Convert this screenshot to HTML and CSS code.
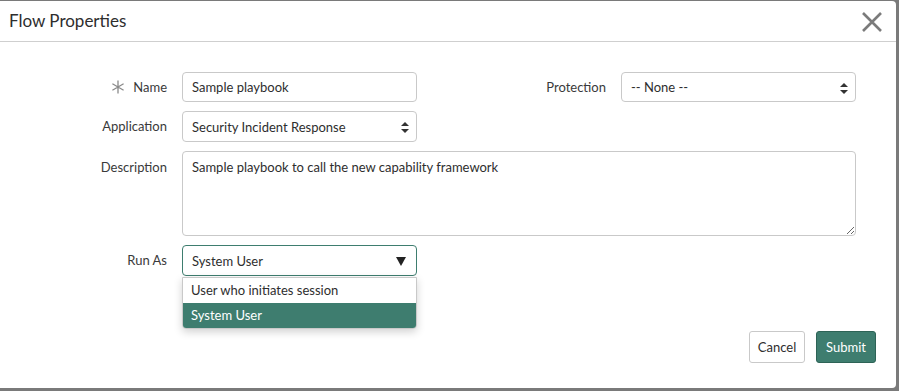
FILE: index.html
```html
<!DOCTYPE html>
<html lang="en">
<head>
    <meta charset="UTF-8">
    <meta name="viewport" content="width=device-width, initial-scale=1.0">
    <title>Flow Properties</title>
    <link rel="stylesheet" href="styles.css">
</head>
<body>
    <div class="modal">
        <!-- header -->
        <div class="modal_head">
            <h1>Flow Properties</h1>
            <span class="close">
                <svg width="20" height="20" viewBox="0 0 20 20">
                    <path d="M1 1 L19 19 M19 1 L1 19" stroke="#7b7b7b" stroke-width="2.6" fill="none"/>
                </svg>
            </span>
        </div>

        <!-- form -->
        <div class="modal_body">
            <div class="form">
                <label class="lbl">
                    <svg class="req" width="14" height="14" viewBox="0 0 14 14">
                        <path d="M7 0.5 V13.5 M1.4 3.8 L12.6 10.2 M12.6 3.8 L1.4 10.2" stroke="#8a8a8a" stroke-width="1.3" fill="none"/>
                    </svg>
                    Name
                </label>
                <div class="field">Sample playbook</div>
                <label class="lbl">Protection</label>
                <div class="field select">-- None --<span class="updown"></span></div>

                <label class="lbl">Application</label>
                <div class="field select">Security Incident Response<span class="updown"></span></div>
                <div></div>
                <div></div>

                <label class="lbl lbl_top">Description</label>
                <textarea class="area" readonly>Sample playbook to call the new capability framework</textarea>

                <label class="lbl">Run As</label>
                <div class="runas">
                    <div class="field select focus">System User<span class="down"></span></div>
                    <ul class="menu">
                        <li>User who initiates session</li>
                        <li class="active">System User</li>
                    </ul>
                </div>
            </div>

            <div class="foot">
                <button class="btn cancel">Cancel</button>
                <button class="btn primary">Submit</button>
            </div>
        </div>
    </div>
</body>
</html>
```

FILE: styles.css
```css
*{
    margin: 0;
    padding: 0;
    box-sizing: border-box;
}
li{
    list-style: none;
}
body{
    background: #7a7a7a;
    font-family: "Lato", "Liberation Sans", sans-serif;
    font-size: 13px;
    color: #333;
}
.modal{
    width: 900px;
    height: 387px;
    margin: 1px 0 0 -4px;
    background: #fff;
    border-radius: 4px;
}
.modal_head{
    height: 41px;
    border-bottom: 1px solid #cfcfcf;
    display: flex;
    align-items: center;
    justify-content: space-between;
    padding: 0 14px 0 13px;
}
.modal_head h1{
    font-weight: normal;
    font-size: 17px;
    color: #2e2e2e;
    margin-top: -1px;
}
.close{
    width: 20px;
    height: 20px;
    margin-top: 1px;
}
.modal_body{
    padding: 30px 40px 0 0;
}
.form{
    display: grid;
    grid-template-columns: 171px 235px 1fr 235px;
    grid-template-rows: 30px 31px 85px 31px;
    column-gap: 15px;
    row-gap: 9px;
}
.lbl{
    display: flex;
    align-items: center;
    justify-content: flex-end;
    color: #3a3a3a;
    margin-top: -1px;
}
.lbl_top{
    align-items: flex-start;
    margin-top: 8px;
}
.req{
    margin-right: 8px;
}
.field{
    border: 1px solid #c9c9c9;
    border-radius: 4px;
    display: flex;
    align-items: center;
    padding: 0 9px;
    color: #2e2e2e;
    position: relative;
}
.select .updown{
    position: absolute;
    right: 7px;
    top: 10px;
    width: 8px;
    height: 11px;
}
.select .updown:before,.select .updown:after{
    content: "";
    position: absolute;
    left: 0;
    border-left: 4px solid transparent;
    border-right: 4px solid transparent;
}
.select .updown:before{
    top: 0;
    border-bottom: 4px solid #333;
}
.select .updown:after{
    bottom: 0;
    border-top: 4px solid #333;
}
.area{
    grid-column: 2 / 5;
    border: 1px solid #c9c9c9;
    border-radius: 4px;
    padding: 7px 9px;
    font: inherit;
    color: #2e2e2e;
    resize: both;
    outline: none;
}
.runas{
    position: relative;
    display: flex;
}
.runas .field{
    flex: 1;
}
.focus{
    border-color: #3e7d6f;
}
.select .down{
    position: absolute;
    right: 10px;
    top: 11px;
    border-left: 5px solid transparent;
    border-right: 5px solid transparent;
    border-top: 9px solid #222;
}
.menu{
    position: absolute;
    top: 32px;
    left: 0;
    width: 235px;
    background: #fff;
    border: 1px solid #c9c9c9;
    border-radius: 0 0 4px 4px;
    box-shadow: 0 3px 8px rgba(0,0,0,0.18);
    overflow: hidden;
}
.menu li{
    height: 25px;
    line-height: 24px;
    padding: 0 8px;
    color: #2e2e2e;
}
.menu li.active{
    background: #3e7d6f;
    color: #fff;
}
.foot{
    display: flex;
    justify-content: flex-end;
    gap: 11px;
    margin-top: 55px;
    margin-right: -20px;
}
.btn{
    height: 32px;
    border: 1px solid #c9c9c9;
    border-radius: 3px;
    background: #fff;
    font: inherit;
    color: #2e2e2e;
}
.btn.cancel{
    width: 56px;
}
.btn.primary{
    width: 60px;
    background: #3e7d6f;
    border-color: #2d6356;
    color: #fff;
}
```
